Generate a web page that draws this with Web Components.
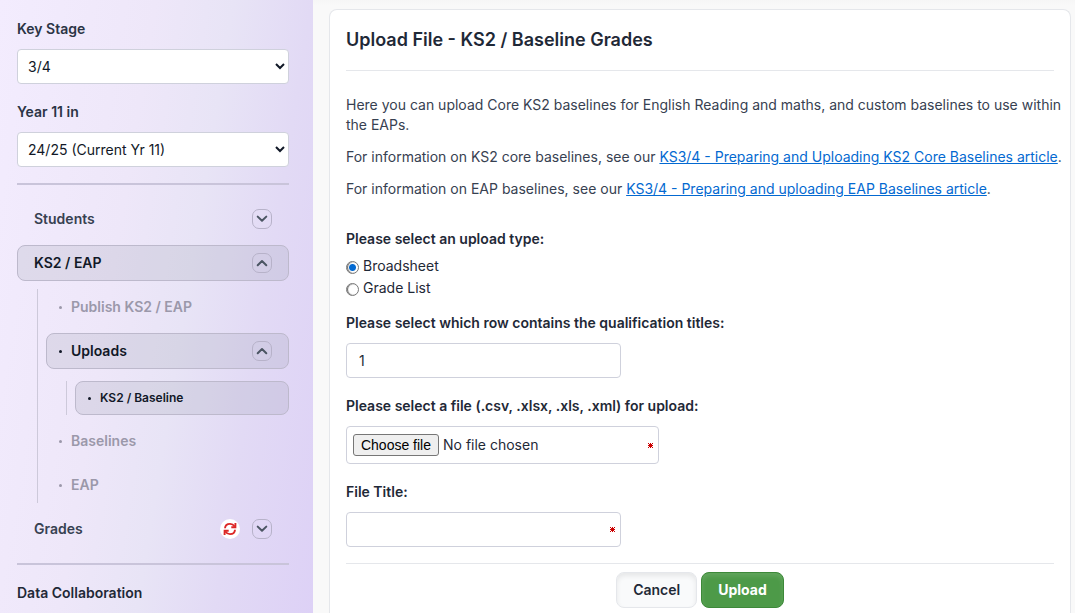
<!DOCTYPE html>
<html lang="en-GB">
<head>
<meta charset="utf-8">
<title>Upload File - KS2 / Baseline Grades</title>
<style>
body { margin: 0; background: #f9f9f9; color: #1f2937; font: 14px/20px Inter, "Liberation Sans", sans-serif; }
</style>
</head>
<body>
<app-shell>
  <side-bar slot="side">
    <select-field label="Key Stage" value="3/4"></select-field>
    <select-field label="Year 11 in" value="24/25 (Current Yr 11)"></select-field>
    <nav-rule></nav-rule>
    <nav-item label="Students" toggle="down"></nav-item>
    <nav-item label="KS2 / EAP" toggle="up" active></nav-item>
    <nav-group>
      <nav-item label="Publish KS2 / EAP" sub muted></nav-item>
      <nav-item label="Uploads" sub active toggle="up"></nav-item>
      <nav-group inner>
        <nav-item label="KS2 / Baseline" sub active small></nav-item>
      </nav-group>
      <nav-item label="Baselines" sub muted></nav-item>
      <nav-item label="EAP" sub muted></nav-item>
    </nav-group>
    <nav-item label="Grades" toggle="down" sync></nav-item>
    <nav-rule></nav-rule>
    <nav-heading>Data Collaboration</nav-heading>
  </side-bar>
  <upload-card>
    <span slot="title">Upload File - KS2 / Baseline Grades</span>
    <intro-text></intro-text>
    <upload-form></upload-form>
  </upload-card>
</app-shell>

<script>
const define = (name, render) => customElements.define(name, class extends HTMLElement {
  connectedCallback() {
    if (this.shadowRoot) return;
    this.attachShadow({ mode: "open" }).innerHTML = render(this);
    if (name === "upload-form") this.watchFile();
  }
  watchFile() {
    const input = this.shadowRoot.querySelector("input[type=file]");
    const status = this.shadowRoot.querySelector(".status");
    this.shadowRoot.querySelector(".choose").addEventListener("click", () => input.click());
    input.addEventListener("change", () => {
      status.textContent = input.files.length ? input.files[0].name : "No file chosen";
    });
  }
});

define("app-shell", () => `
<style>
  :host { display: grid; grid-template-columns: 313px minmax(0, 1fr); height: 100vh; overflow: hidden; }
  main { padding: 9px 4px 0 16px; overflow: auto; scrollbar-width: none; background: linear-gradient(#f6f6f6, #f9f9f9 6px); display: grid; }
</style>
<slot name="side"></slot>
<main><slot></slot></main>`);

define("side-bar", () => `
<style>
  :host { display: block; overflow: auto; scrollbar-width: none; background: linear-gradient(99deg, #f3ecfe 0%, #eee7f9 38%, #e8e4f6 57%, #e2daf5 76%, #ddd1f6 100%); }
  nav { display: flex; flex-direction: column; gap: 8px; padding: 19px 24px 24px 17px; }
</style>
<nav aria-label="Main"><slot></slot></nav>`);

define("select-field", el => `
<style>
  :host { display: block; }
  :host(:not(:first-child)) { margin-top: 10px; }
  label { display: block; margin-bottom: 10px; font-weight: 600; color: #2b3445; }
  select { display: block; width: 100%; height: 35px; padding: 0 6px; border: 1px solid #cfd1dc; border-radius: 4px; background: #fff; color: #111827; font: inherit; }
</style>
<label for="choice">${el.getAttribute("label")}</label>
<select id="choice"><option>${el.getAttribute("value")}</option></select>`);

define("nav-rule", () => `
<style>
  :host { display: block; padding: 8px 0; }
  hr { margin: 0; border: 0; height: 2px; background: #c9c4da; }
</style><hr>`);

define("nav-heading", () => `
<style>
  :host { display: block; padding-top: 2px; font-weight: 600; color: #1f2937; }
</style><slot></slot>`);

define("nav-group", () => `
<style>
  :host { display: flex; flex-direction: column; gap: 8px; margin-left: 20px; padding-left: 8px; border-left: 1px solid #cdc9da; }
  :host([inner]) { margin-top: 4px; }
</style><slot></slot>`);

const chevron = dir => `<svg viewBox="0 0 12 12" width="12" height="12" fill="none" stroke="currentColor" stroke-width="2" stroke-linecap="round" stroke-linejoin="round"><path d="${dir === "up" ? "M1.700 8.200 6 4l4.300 4.200" : "M1.700 3.600 6 7.800l4.300-4.200"}"/></svg>`;

define("nav-item", el => `
<style>
  :host { display: flex; align-items: center; box-sizing: border-box; height: 36px; padding: 0 16px; border: 1px solid transparent; border-radius: 8px; font-weight: 600; color: #374151; }
  :host([sub]) { padding-left: 12px; }
  :host([active]) { background: rgba(145, 150, 165, .19); border-color: #bdb9cc; color: #111827; }
  :host([small]) { height: 34px; font-size: 12px; }
  :host([muted]) { color: #9b98aa; }
  a { flex: 1; display: flex; align-items: center; color: inherit; text-decoration: none; }
  .dot { width: 3px; height: 3px; margin-right: 9px; border-radius: 50%; background: currentColor; }
  button { display: grid; place-items: center; width: 20px; height: 20px; padding: 0; border: 1px solid #b7b2c9; border-radius: 7px; background: none; color: #4b5563; }
  .sync { display: grid; place-items: center; width: 20px; height: 20px; margin-right: 12px; border-radius: 50%; background: #fff; color: #dc2626; }
</style>
<a href="#">${el.hasAttribute("sub") ? '<i class="dot"></i>' : ""}${el.getAttribute("label")}</a>
${el.hasAttribute("sync") ? `<span class="sync"><svg width="14" height="14" viewBox="0 0 14 14" fill="none" stroke="currentColor" stroke-width="1.900"><path d="M2 6.300C2.200 3.500 4.300 1.900 7 1.900c2 0 3.400.8 4.700 2.600M12 7.700C11.800 10.500 9.700 12.100 7 12.100c-2 0-3.400-.8-4.700-2.600"/><path d="M12.400 1v4.300H8.300M1.600 13V8.700h4.100"/></svg></span>` : ""}
${el.hasAttribute("toggle") ? `<button type="button" aria-label="Toggle ${el.getAttribute("label")}">${chevron(el.getAttribute("toggle"))}</button>` : ""}`);

define("upload-card", () => `
<style>
  :host { display: block; box-sizing: border-box; padding: 0 16px; background: #fff; border: 1px solid #e5e7eb; border-radius: 8px 8px 0 0; border-bottom: 0; }
  h1 { margin: 0 0 24px; padding: 18px 0 18px; border-bottom: 1px solid #e5e7eb; font-size: 18px; line-height: 24px; font-weight: 600; color: #1f2937; }
</style>
<h1><slot name="title"></slot></h1>
<slot></slot>`);

define("intro-text", () => `
<style>
  :host { display: block; margin-right: -12px; color: #374151; }
  p { margin: 0 0 12px; }
  a { color: #0369d1; }
</style>
<p>Here you can upload Core KS2 baselines for English Reading and maths, and custom baselines to use within the EAPs.</p>
<p>For information on KS2 core baselines, see our <a href="#">KS3/4 - Preparing and Uploading KS2 Core Baselines article</a>.</p>
<p>For information on EAP baselines, see our <a href="#">KS3/4 - Preparing and uploading EAP Baselines article</a>.</p>`);

const asterisk = `<svg class="star" width="5" height="5" viewBox="0 0 5 5" fill="#c00" shape-rendering="crispEdges" aria-hidden="true"><path d="M0 0h1v1h1V0h1v1h1V0h1v1H4v1h1v1H4v1h1v1H4V4H3v1H2V4H1v1H0V4h1V3H0V2h1V1H0z"/></svg>`;

define("upload-form", () => `
<style>
  :host { display: block; padding-top: 18px; }
  form { display: flex; flex-direction: column; gap: 18px; }
  fieldset { margin: 0 0 -4px; padding: 0; border: 0; min-width: 0; }
  legend, .field > label { display: block; padding: 0; margin-bottom: 10px; font-weight: 600; color: #1f2937; }
  legend { margin-bottom: 6px; }
  .radio { display: flex; align-items: center; gap: 4px; height: 22px; color: #1f2937; }
  .radio input { appearance: none; box-sizing: border-box; width: 13px; height: 13px; margin: 2px 0 0; border: 1px solid #777; border-radius: 50%; background: #fff; box-shadow: inset 1px 0 1px #666; }
  .radio input:checked { background: radial-gradient(circle, #0369d1 3px, #fff 4px); }
  .box { position: relative; display: flex; align-items: center; box-sizing: border-box; width: 275px; height: 35px; border: 1px solid #cfd1dc; border-radius: 4px; background: #fff; }
  .box.file { width: 313px; height: 38px; padding-left: 6px; gap: 4px; }
  .box input:not([type=file]) { flex: 1; min-width: 0; height: 100%; box-sizing: border-box; padding: 0 12px; border: 0; background: none; color: #1f2937; font: inherit; outline: 0; }
  input[type=file] { position: absolute; inset: 0; width: 100%; height: 100%; opacity: 0; pointer-events: none; }
  .choose { box-sizing: border-box; width: 86px; height: 22px; padding: 0; border: 1px solid #767676; border-radius: 3px; background: #efefef; color: #000; font: 14px/18px "Liberation Sans", sans-serif; }
  .status { flex: 1; color: #1f2937; }
  .star { margin-right: 5px; }
  footer { display: flex; justify-content: center; gap: 4px; margin-top: -2px; padding-top: 8px; border-top: 1px solid #e5e7eb; }
  .action { height: 36px; padding: 0 16px; border: 1px solid #e5e7eb; border-radius: 8px; background: #f9fafb; box-shadow: inset 0 3px 5px rgba(0, 0, 0, .08); color: #1f2937; font: 600 14px/20px Inter, sans-serif; }
  .primary { border-color: #3d8939; background: #4d9a48; box-shadow: inset 0 3px 5px rgba(255, 255, 255, .12); color: #fff; font-weight: 700; }
</style>
<form>
  <fieldset>
    <legend>Please select an upload type:</legend>
    <label class="radio"><input type="radio" name="type" checked>Broadsheet</label>
    <label class="radio"><input type="radio" name="type">Grade List</label>
  </fieldset>
  <div class="field">
    <label for="row">Please select which row contains the qualification titles:</label>
    <div class="box"><input id="row" type="text" value="1"></div>
  </div>
  <div class="field">
    <label for="file">Please select a file (.csv, .xlsx, .xls, .xml) for upload:</label>
    <div class="box file"><input id="file" type="file" accept=".csv,.xlsx,.xls,.xml"><button class="choose" type="button">Choose file</button><span class="status">No file chosen</span>${asterisk}</div>
  </div>
  <div class="field">
    <label for="title">File Title:</label>
    <div class="box"><input id="title" type="text">${asterisk}</div>
  </div>
  <footer>
    <button class="action" type="button">Cancel</button>
    <button class="action primary" type="submit">Upload</button>
  </footer>
</form>`);
</script>
</body>
</html>
